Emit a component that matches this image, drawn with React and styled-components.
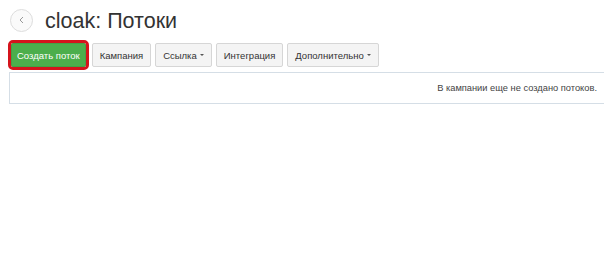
import React from "react";
import styled, { createGlobalStyle } from "styled-components";

const GlobalStyle = createGlobalStyle`
  html, body {
    margin: 0;
    padding: 0;
    background: #fff;
    overflow: hidden;
  }
  body {
    font-family: "Liberation Sans", Arial, sans-serif;
    color: #333;
  }
`;

const Page = styled.div`
  padding: 8px 0 0 9px;
`;

const Header = styled.div`
  display: flex;
  align-items: center;
  gap: 12px;
  height: 24px;
  padding-left: 1px;
`;

const BackButton = styled.button`
  width: 23px;
  height: 23px;
  border-radius: 50%;
  border: 1px solid #ddd;
  background: #fafafa;
  display: flex;
  align-items: center;
  justify-content: center;
  padding: 0;
  cursor: pointer;
`;

const Title = styled.h1`
  margin: 0;
  font-size: 21.5px;
  font-weight: 400;
  color: #333;
  line-height: 26px;
  padding-top: 2px;
`;

const Toolbar = styled.div`
  display: flex;
  align-items: center;
  gap: 4px;
  margin-top: 11px;
`;

const Button = styled.button`
  height: 24px;
  padding: 0 7px;
  font-family: "Liberation Sans", Arial, sans-serif;
  font-size: 9.5px;
  font-weight: 400;
  color: #333;
  background: #f4f4f4;
  border: 1px solid #d6d6d6;
  border-radius: 2px;
  display: flex;
  align-items: center;
  gap: 3px;
  cursor: pointer;
`;

const PrimaryButton = styled(Button)`
  background: #4cae4c;
  border-color: #45a045;
  color: #fff;
  padding: 0 5px;
  margin: 0 2px 0 2px;
  outline: 3px solid #d5141c;
  outline-offset: 0;
`;

const Caret = styled.span`
  width: 0;
  height: 0;
  border-left: 2.5px solid transparent;
  border-right: 2.5px solid transparent;
  border-top: 2.5px solid #555;
`;

const EmptyBox = styled.div`
  margin-top: 5px;
  width: 600px;
  height: 32px;
  box-sizing: border-box;
  border: 1px solid #d5dee6;
  background: #fff;
  display: flex;
  align-items: center;
  justify-content: flex-end;
  padding-right: 11px;
  font-size: 9.3px;
  color: #444;
`;

export default function App() {
  return (
    <>
      <GlobalStyle />
      <Page>
        <Header>
          <BackButton aria-label="Назад">
            <svg width="10" height="10" viewBox="0 0 10 10">
              <path d="M6 2 L3 5 L6 8" fill="none" stroke="#999" strokeWidth="1" />
            </svg>
          </BackButton>
          <Title>cloak: Потоки</Title>
        </Header>
        <Toolbar>
          <PrimaryButton>Создать поток</PrimaryButton>
          <Button>Кампания</Button>
          <Button>
            Ссылка <Caret />
          </Button>
          <Button>Интеграция</Button>
          <Button>
            Дополнительно <Caret />
          </Button>
        </Toolbar>
        <EmptyBox>В кампании еще не создано потоков.</EmptyBox>
      </Page>
    </>
  );
}
